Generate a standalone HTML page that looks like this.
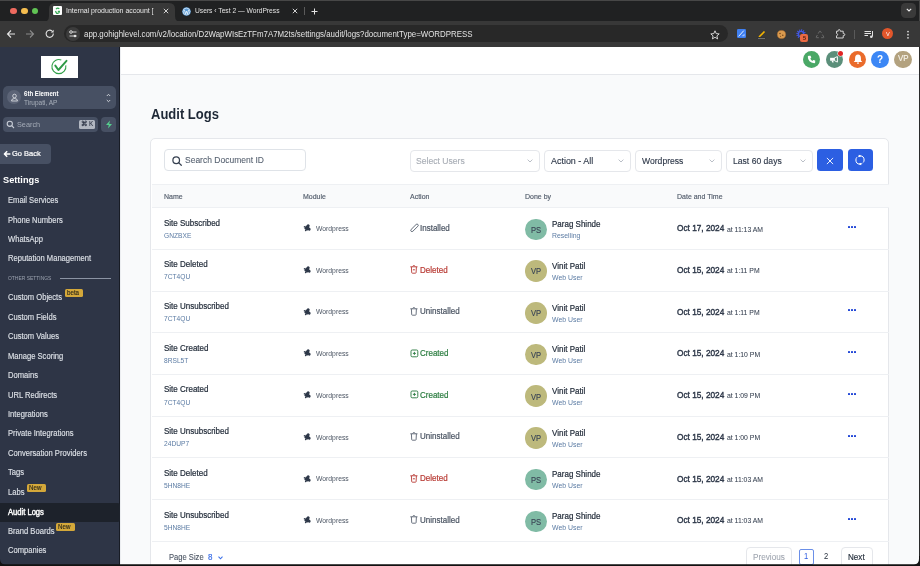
<!DOCTYPE html>
<html><head><meta charset="utf-8">
<style>
*{box-sizing:border-box;margin:0;padding:0}
html,body{width:920px;height:566px;overflow:hidden;background:#151515;font-family:"Liberation Sans",sans-serif;position:relative}
.a{position:absolute}
.t{position:absolute;white-space:nowrap;will-change:transform}
svg{overflow:visible}
</style></head>
<body>
<div class="a" style="left:0px;top:0px;width:920px;height:47px;background:#202122"></div>
<div class="a" style="left:0px;top:0px;width:920px;height:1px;background:#474747"></div>
<div class="a" style="left:919px;top:0px;width:1px;height:47px;background:#474747"></div>
<div class="a" style="left:10.1px;top:7.6px;width:6.8px;height:6.8px;background:#ee6a5f;border-radius:50%"></div>
<div class="a" style="left:21.1px;top:7.6px;width:6.8px;height:6.8px;background:#f5bd4f;border-radius:50%"></div>
<div class="a" style="left:31.6px;top:7.6px;width:6.8px;height:6.8px;background:#61c454;border-radius:50%"></div>
<svg class="a" style="left:43px;top:3px" width="138" height="19" viewBox="0 0 138 19"><path d="M0 19 Q6 19 6 13 L6 6 Q6 0 12 0 L126 0 Q132 0 132 6 L132 13 Q132 19 138 19 Z" fill="#383838"/></svg>
<div class="a" style="left:0px;top:21px;width:920px;height:26px;background:#383838"></div>
<div class="a" style="left:53px;top:6px;width:9px;height:9px;background:#fff;border-radius:1px"></div>
<svg class="a" style="left:53px;top:6px;" width="9" height="9" viewBox="0 0 9 9"><path d="M3 3.2 Q4.5 1.5 6.3 2.8 M2.6 4.8 Q3 7.6 4.6 7.4 Q6.4 7.2 6.4 5.4 L4.8 5.4" stroke="#34a853" stroke-width="1.2" fill="none"/></svg>
<div class="t" style="left:66px;top:5.98px;font-size:6.95px;line-height:9px;color:#e8e8e8;width:94px;overflow:hidden;-webkit-mask-image:linear-gradient(90deg,#000 86%,transparent 97%)transform:scaleY(1.08);transform-origin:0 4.42px;">Internal production account [</div>
<svg class="a" style="left:162.5px;top:8px;" width="6" height="6" viewBox="0 0 6 6"><path d="M0.8 0.8 L5.2 5.2 M5.2 0.8 L0.8 5.2" stroke="#e3e3e3" stroke-width="0.9"/></svg>
<svg class="a" style="left:291.5px;top:8px;" width="6" height="6" viewBox="0 0 6 6"><path d="M0.8 0.8 L5.2 5.2 M5.2 0.8 L0.8 5.2" stroke="#e3e3e3" stroke-width="0.9"/></svg>
<svg class="a" style="left:181.5px;top:6.5px;" width="9" height="9" viewBox="0 0 9 9"><circle cx="4.5" cy="4.5" r="4.3" fill="#5b9bd5"/><circle cx="4.5" cy="4.5" r="3.4" fill="none" stroke="#fff" stroke-width="0.6"/><path d="M2.4 3 L3.6 6.8 L4.5 4.2 L5.4 6.8 L6.6 3" stroke="#fff" stroke-width="0.7" fill="none"/></svg>
<div class="t" style="left:195px;top:5.98px;font-size:6.7px;line-height:9px;color:#e3e3e3;transform:scaleY(1.08);transform-origin:0 4.42px;">Users ‹ Test 2 — WordPress</div>
<div class="a" style="left:304px;top:7px;width:0.8px;height:8px;background:#5a5a5a"></div>
<svg class="a" style="left:310.5px;top:7.5px;" width="7" height="7" viewBox="0 0 7 7"><path d="M3.5 0.5 V6.5 M0.5 3.5 H6.5" stroke="#e3e3e3" stroke-width="1"/></svg>
<div class="a" style="left:901px;top:2.9px;width:15px;height:15px;background:#3a3a3a;border-radius:4.5px"></div>
<svg class="a" style="left:905.5px;top:8.2px;" width="6" height="4" viewBox="0 0 6 4"><path d="M0.8 0.8 L3 3 L5.2 0.8" stroke="#f0f0f0" stroke-width="1.1" fill="none"/></svg>
<svg class="a" style="left:6px;top:29px;" width="10" height="10" viewBox="0 0 10 10"><path d="M9 5 H1.5 M5 1.5 L1.5 5 L5 8.5" stroke="#e3e3e3" stroke-width="1.1" fill="none"/></svg>
<svg class="a" style="left:25px;top:29px;" width="10" height="10" viewBox="0 0 10 10"><path d="M1 5 H8.5 M5 1.5 L8.5 5 L5 8.5" stroke="#8a8a8a" stroke-width="1.1" fill="none"/></svg>
<svg class="a" style="left:45px;top:29px;" width="10" height="10" viewBox="0 0 10 10"><path d="M8.3 4.5 A3.6 3.6 0 1 1 7 2" stroke="#e3e3e3" stroke-width="1.1" fill="none"/><path d="M8.6 0.8 V3.6 H5.8 Z" fill="#e3e3e3"/></svg>
<div class="a" style="left:64px;top:25.3px;width:664px;height:17px;background:#282828;border-radius:8.5px"></div>
<div class="a" style="left:66px;top:26.5px;width:14px;height:14px;background:#3c3c3c;border-radius:50%"></div>
<svg class="a" style="left:68px;top:28.5px;" width="10" height="10" viewBox="0 0 10 10"><path d="M1.5 3 H8.5 M1.5 7 H8.5" stroke="#e3e3e3" stroke-width="0.9"/><circle cx="3" cy="3" r="1.3" fill="#3c3c3c" stroke="#e3e3e3" stroke-width="0.9"/><circle cx="7" cy="7" r="1.3" fill="#e3e3e3"/></svg>
<div class="t" style="left:84px;top:30.29px;font-size:7.9px;line-height:10px;color:#e3e3e3;transform:scaleY(1.08);transform-origin:0 4.91px;">app.gohighlevel.com/v2/location/D2WapWIsEzTFm7A7M2ts/settings/audit/logs?documentType=WORDPRESS</div>
<svg class="a" style="left:710px;top:29.5px;" width="10" height="10" viewBox="0 0 10 10"><path d="M5 0.8 L6.2 3.6 L9.2 3.9 L6.9 5.9 L7.6 8.9 L5 7.3 L2.4 8.9 L3.1 5.9 L0.8 3.9 L3.8 3.6 Z" stroke="#e3e3e3" stroke-width="0.9" fill="none" stroke-linejoin="round"/></svg>
<svg class="a" style="left:737.3px;top:29.4px;" width="9" height="9" viewBox="0 0 9 9"><rect x="0" y="0" width="9" height="9" rx="1.3" fill="#3f7ff0"/><path d="M1.6 7.4 L6.8 1.6" stroke="#fff" stroke-width="0.9"/><path d="M4.5 7.3 H7.6 V4.5 Z" fill="#9fc0fa"/></svg>
<svg class="a" style="left:756.5px;top:29.5px;" width="9" height="9" viewBox="0 0 9 9"><path d="M2 7 L7.5 1.5" stroke="#f4b400" stroke-width="1.6"/><rect x="0.5" y="7" width="8" height="2" fill="#333"/><path d="M1 8.5 H8" stroke="#999" stroke-width="0.6"/></svg>
<svg class="a" style="left:776.5px;top:29.5px;" width="9" height="9" viewBox="0 0 9 9"><circle cx="4.5" cy="4.5" r="4.1" fill="#d99a4e"/><circle cx="4.5" cy="4.5" r="4.1" fill="none" stroke="#b87430" stroke-width="0.5"/><circle cx="3" cy="3.5" r="0.7" fill="#6b3c14"/><circle cx="5.8" cy="5.3" r="0.7" fill="#6b3c14"/><circle cx="3.6" cy="6.2" r="0.5" fill="#6b3c14"/></svg>
<svg class="a" style="left:795.5px;top:28.5px;" width="10" height="10" viewBox="0 0 10 10"><circle cx="5" cy="5" r="3.9" fill="none" stroke="#4258e0" stroke-width="1.6" stroke-dasharray="1.1 0.9"/><circle cx="5" cy="5" r="2.6" fill="none" stroke="#4258e0" stroke-width="1.4"/></svg>
<div class="a" style="left:800.3px;top:34.3px;width:7.7px;height:7.6px;background:#ec6a43;border-radius:2px"></div>
<div class="t" style="left:802.5px;top:34.66px;font-size:5.5px;line-height:7px;color:#4a1a0a;font-weight:bold;transform:scaleY(1.08);transform-origin:0 3.44px;">5</div>
<svg class="a" style="left:814.5px;top:29.5px;" width="10" height="10" viewBox="0 0 10 10"><path d="M3.2 3.6 L4.6 1.2 Q5 0.7 5.4 1.2 L6.4 2.9 M7.4 4.6 L8.8 7 Q9 7.7 8.4 7.7 H6.2 M3.8 7.7 H1.6 Q1 7.7 1.2 7 L2.4 5" stroke="#6e6e6e" stroke-width="0.9" fill="none"/></svg>
<svg class="a" style="left:834.5px;top:29.3px;" width="11" height="10" viewBox="0 0 11 10"><path d="M1.5 2.2 H3.2 V1.6 Q3.2 0.6 4.2 0.6 Q5.2 0.6 5.2 1.6 V2.2 H8.2 V4.6 H8.8 Q9.8 4.6 9.8 5.6 Q9.8 6.6 8.8 6.6 H8.2 V9 H1.5 V6.8 Q2.6 6.6 2.6 5.6 Q2.6 4.6 1.5 4.4 Z" stroke="#e3e3e3" stroke-width="0.9" fill="none" stroke-linejoin="round"/></svg>
<div class="a" style="left:853.5px;top:29.5px;width:0.8px;height:9px;background:#5a5a5a"></div>
<svg class="a" style="left:864px;top:29.5px;" width="10" height="9" viewBox="0 0 10 9"><path d="M0.5 1.5 H7 M0.5 3.5 H7 M0.5 5.5 H4" stroke="#e3e3e3" stroke-width="1"/><path d="M8.5 1 V6.5" stroke="#e3e3e3" stroke-width="1"/><circle cx="7.3" cy="6.8" r="1.3" fill="#e3e3e3"/></svg>
<div class="a" style="left:882.3px;top:28.4px;width:11px;height:11px;background:#e2562b;border-radius:50%"></div>
<div class="t" style="left:885.6px;top:30.76px;font-size:5.6px;line-height:7px;color:#fff;">V</div>
<svg class="a" style="left:905.5px;top:29.5px;" width="4" height="10" viewBox="0 0 4 10"><circle cx="2" cy="1.6" r="0.85" fill="#e3e3e3"/><circle cx="2" cy="4.7" r="0.85" fill="#e3e3e3"/><circle cx="2" cy="7.8" r="0.85" fill="#e3e3e3"/></svg>
<div class="a" style="left:0px;top:47px;width:920px;height:519px;background:#f9fafb"></div>
<div class="a" style="left:0px;top:47px;width:120px;height:519px;background:#2e3546"></div>
<div class="a" style="left:119px;top:47px;width:1px;height:519px;background:#181c25"></div>
<div class="a" style="left:41px;top:55.6px;width:37px;height:22px;background:#fff"></div>
<svg class="a" style="left:50px;top:58px;" width="18" height="18" viewBox="0 0 18 18"><path d="M15.8 7.4 A7 7 0 1 1 11.3 2.0" fill="none" stroke="#33a04a" stroke-width="1.1"/><path d="M5.3 7.6 L8.4 12 L16.5 2.8" stroke="#2e9a46" stroke-width="1.9" fill="none" stroke-linecap="round" stroke-linejoin="round"/></svg>
<div class="a" style="left:3px;top:86px;width:113px;height:22.5px;background:#475063;border-radius:5px"></div>
<div class="a" style="left:7px;top:90.3px;width:14px;height:14px;background:#5c6477;border-radius:50%"></div>
<svg class="a" style="left:9.5px;top:92.8px;" width="9" height="9" viewBox="0 0 9 9"><circle cx="4.5" cy="3" r="1.8" fill="none" stroke="#e5e7eb" stroke-width="0.8"/><path d="M1.5 8 Q1.5 5.5 4.5 5.5 Q7.5 5.5 7.5 8 Z" fill="none" stroke="#e5e7eb" stroke-width="0.8"/></svg>
<div class="t" style="left:24px;top:90.37px;font-size:6.1px;line-height:8px;color:#fff;font-weight:bold;transform:scaleY(1.08);transform-origin:0 3.93px;">6th Element</div>
<div class="t" style="left:24px;top:98.87px;font-size:6.5px;line-height:8px;color:#a9b0bb;transform:scaleY(1.08);transform-origin:0 3.93px;">Tirupati, AP</div>
<svg class="a" style="left:105.5px;top:92.5px;" width="5" height="10" viewBox="0 0 5 10"><path d="M0.8 3 L2.5 1.3 L4.2 3 M0.8 7 L2.5 8.7 L4.2 7" stroke="#d1d5db" stroke-width="0.95" fill="none"/></svg>
<div class="a" style="left:3px;top:117px;width:95px;height:14.5px;background:#475063;border-radius:4px"></div>
<svg class="a" style="left:6px;top:119.5px;" width="9" height="9" viewBox="0 0 9 9"><circle cx="3.8" cy="3.8" r="2.6" fill="none" stroke="#c7ccd5" stroke-width="1.1"/><path d="M5.7 5.7 L8 8" stroke="#c7ccd5" stroke-width="1.1"/></svg>
<div class="t" style="left:16.7px;top:119.78px;font-size:7.3px;line-height:9px;color:#a3aab6;transform:scaleY(1.08);transform-origin:0 4.42px;">Search</div>
<div class="a" style="left:79px;top:120px;width:16px;height:8.7px;background:#b3b8c2;border-radius:1.5px"></div>
<div class="t" style="left:80.6px;top:120.47px;font-size:6.3px;line-height:8px;color:#2e3546;font-weight:bold;transform:scaleY(1.08);transform-origin:0 3.93px;">⌘</div>
<div class="t" style="left:88.6px;top:120.47px;font-size:6.3px;line-height:8px;color:#2e3546;-webkit-text-stroke-width:0.1px;transform:scaleY(1.08);transform-origin:0 3.93px;">K</div>
<div class="a" style="left:101px;top:117px;width:15px;height:14.5px;background:#475063;border-radius:4px"></div>
<svg class="a" style="left:104.5px;top:120px;" width="8" height="9" viewBox="0 0 8 9"><path d="M5 0.5 L1 5 H3.8 L3 8.5 L7 4 H4.2 Z" fill="#55d08e"/></svg>
<div class="a" style="left:0px;top:144px;width:51px;height:19.7px;background:#475063;border-radius:0 4px 4px 0"></div>
<svg class="a" style="left:3.2px;top:150.2px;" width="8" height="8" viewBox="0 0 8 8"><path d="M7.4 4 H1.5 M4.2 1.2 L1.4 4 L4.2 6.8" stroke="#fff" stroke-width="1.5" fill="none" stroke-linejoin="round"/></svg>
<div class="t" style="left:12px;top:149.29px;font-size:7.5px;line-height:10px;color:#fff;-webkit-text-stroke-width:0.2px;transform:scaleY(1.08);transform-origin:0 4.91px;">Go Back</div>
<div class="t" style="left:3.4px;top:173.91px;font-size:9.2px;line-height:12px;color:#fff;font-weight:bold;transform:scaleY(1.08);transform-origin:0 5.89px;">Settings</div>
<div class="t" style="left:7.7px;top:196.09px;font-size:7.6px;line-height:10px;color:#dde1e7;-webkit-text-stroke-width:0.12px;transform:scaleY(1.08);transform-origin:0 4.91px;">Email Services</div>
<div class="t" style="left:7.7px;top:215.54px;font-size:7.6px;line-height:10px;color:#dde1e7;-webkit-text-stroke-width:0.12px;transform:scaleY(1.08);transform-origin:0 4.91px;">Phone Numbers</div>
<div class="t" style="left:7.7px;top:234.99px;font-size:7.6px;line-height:10px;color:#dde1e7;-webkit-text-stroke-width:0.12px;transform:scaleY(1.08);transform-origin:0 4.91px;">WhatsApp</div>
<div class="t" style="left:7.7px;top:254.44px;font-size:7.6px;line-height:10px;color:#dde1e7;-webkit-text-stroke-width:0.12px;transform:scaleY(1.08);transform-origin:0 4.91px;">Reputation Management</div>
<div class="t" style="left:7.6px;top:275.86px;font-size:4.95px;line-height:6px;color:#9aa1ae;transform:scaleY(1.08);transform-origin:0 2.94px;">OTHER SETTINGS</div>
<div class="a" style="left:59.7px;top:278.40000000000003px;width:51.7px;height:0.8px;background:#8b93a3"></div>
<div class="t" style="left:7.7px;top:293.34px;font-size:7.6px;line-height:10px;color:#dde1e7;-webkit-text-stroke-width:0.12px;transform:scaleY(1.08);transform-origin:0 4.91px;">Custom Objects</div>
<div class="t" style="left:7.7px;top:312.79px;font-size:7.6px;line-height:10px;color:#dde1e7;-webkit-text-stroke-width:0.12px;transform:scaleY(1.08);transform-origin:0 4.91px;">Custom Fields</div>
<div class="t" style="left:7.7px;top:332.24px;font-size:7.6px;line-height:10px;color:#dde1e7;-webkit-text-stroke-width:0.12px;transform:scaleY(1.08);transform-origin:0 4.91px;">Custom Values</div>
<div class="t" style="left:7.7px;top:351.69px;font-size:7.6px;line-height:10px;color:#dde1e7;-webkit-text-stroke-width:0.12px;transform:scaleY(1.08);transform-origin:0 4.91px;">Manage Scoring</div>
<div class="t" style="left:7.7px;top:371.14px;font-size:7.6px;line-height:10px;color:#dde1e7;-webkit-text-stroke-width:0.12px;transform:scaleY(1.08);transform-origin:0 4.91px;">Domains</div>
<div class="t" style="left:7.7px;top:390.59px;font-size:7.6px;line-height:10px;color:#dde1e7;-webkit-text-stroke-width:0.12px;transform:scaleY(1.08);transform-origin:0 4.91px;">URL Redirects</div>
<div class="t" style="left:7.7px;top:410.04px;font-size:7.6px;line-height:10px;color:#dde1e7;-webkit-text-stroke-width:0.12px;transform:scaleY(1.08);transform-origin:0 4.91px;">Integrations</div>
<div class="t" style="left:7.7px;top:429.49px;font-size:7.6px;line-height:10px;color:#dde1e7;-webkit-text-stroke-width:0.12px;transform:scaleY(1.08);transform-origin:0 4.91px;">Private Integrations</div>
<div class="t" style="left:7.7px;top:448.94px;font-size:7.6px;line-height:10px;color:#dde1e7;-webkit-text-stroke-width:0.12px;transform:scaleY(1.08);transform-origin:0 4.91px;">Conversation Providers</div>
<div class="t" style="left:7.7px;top:468.39px;font-size:7.6px;line-height:10px;color:#dde1e7;-webkit-text-stroke-width:0.12px;transform:scaleY(1.08);transform-origin:0 4.91px;">Tags</div>
<div class="t" style="left:7.7px;top:487.84px;font-size:7.6px;line-height:10px;color:#dde1e7;-webkit-text-stroke-width:0.12px;transform:scaleY(1.08);transform-origin:0 4.91px;">Labs</div>
<div class="a" style="left:0px;top:502.70000000000005px;width:119.5px;height:19.2px;background:#1d222b;border-radius:0 2.5px 2.5px 0"></div>
<div class="t" style="left:7.6px;top:508.19px;font-size:7.6px;line-height:10px;color:#fff;-webkit-text-stroke-width:0.38px;transform:scaleY(1.08);transform-origin:0 4.91px;">Audit Logs</div>
<div class="t" style="left:7.7px;top:526.74px;font-size:7.6px;line-height:10px;color:#dde1e7;-webkit-text-stroke-width:0.12px;transform:scaleY(1.08);transform-origin:0 4.91px;">Brand Boards</div>
<div class="t" style="left:7.7px;top:546.19px;font-size:7.6px;line-height:10px;color:#dde1e7;-webkit-text-stroke-width:0.12px;transform:scaleY(1.08);transform-origin:0 4.91px;">Companies</div>
<div class="a" style="left:64.8px;top:289px;width:18.4px;height:8.2px;background:#d4a83a;border-radius:1.5px"></div>
<div class="t" style="left:66.8px;top:289.07px;font-size:6.2px;line-height:8px;color:#2f2a1a;-webkit-text-stroke-width:0.15px;transform:scaleY(1.08);transform-origin:0 3.93px;">beta</div>
<div class="a" style="left:27.2px;top:484px;width:18.4px;height:8.2px;background:#d4a83a;border-radius:1.5px"></div>
<div class="t" style="left:29px;top:484.07px;font-size:6.2px;line-height:8px;color:#2f2a1a;-webkit-text-stroke-width:0.15px;transform:scaleY(1.08);transform-origin:0 3.93px;">New</div>
<div class="a" style="left:56.4px;top:523px;width:18.4px;height:8.2px;background:#d4a83a;border-radius:1.5px"></div>
<div class="t" style="left:58.2px;top:523.07px;font-size:6.2px;line-height:8px;color:#2f2a1a;-webkit-text-stroke-width:0.15px;transform:scaleY(1.08);transform-origin:0 3.93px;">New</div>
<div class="a" style="left:120px;top:47px;width:800px;height:28.3px;background:#fff;border-bottom:1px solid #e5e7eb"></div>
<div class="a" style="left:120px;top:47px;width:1px;height:519px;background:#eceef1"></div>
<div class="a" style="left:802.9px;top:50.5px;width:17.2px;height:17.2px;background:#4aa866;border-radius:50%"></div>
<div class="a" style="left:825.8px;top:50.5px;width:17.2px;height:17.2px;background:#5b8f7a;border-radius:50%"></div>
<div class="a" style="left:848.8px;top:50.5px;width:17.2px;height:17.2px;background:#ea6b2b;border-radius:50%"></div>
<div class="a" style="left:871.4px;top:50.5px;width:17.2px;height:17.2px;background:#3c87f5;border-radius:50%"></div>
<div class="a" style="left:894.4px;top:50.5px;width:17.2px;height:17.2px;background:#b3a27f;border-radius:50%"></div>
<svg class="a" style="left:807px;top:54.6px;" width="9" height="9" viewBox="0 0 9 9"><path d="M2 0.8 L3.6 0.8 L4.3 2.8 L3.3 3.6 Q4 5.2 5.4 5.9 L6.2 4.9 L8.2 5.6 L8.2 7.2 Q8.2 8.2 7.2 8.2 Q1 7.8 0.8 1.8 Q0.8 0.8 2 0.8 Z" fill="#fff"/></svg>
<svg class="a" style="left:829px;top:55px;" width="10" height="9" viewBox="0 0 10 9"><rect x="1.1" y="2.8" width="4.3" height="2.9" fill="#fff"/><path d="M2.4 5.6 L3.3 7.6 H4.6 L4.3 5.6 Z" fill="#fff"/><path d="M5.4 2.9 L8.4 1.6 V7.1 L5.4 5.6 Z" fill="none" stroke="#fff" stroke-width="0.95" stroke-linejoin="round"/></svg>
<div class="a" style="left:837.6px;top:50.7px;width:5.4px;height:5.4px;background:#e02424;border-radius:50%;box-shadow:0 0 0 0.5px #fff"></div>
<svg class="a" style="left:852.6px;top:54.2px;" width="10" height="10" viewBox="0 0 10 10"><path d="M5 0.4 Q7.8 0.6 7.9 4 L8 6.4 L9.3 8.1 H0.7 L2 6.4 L2.1 4 Q2.2 0.6 5 0.4 Z" fill="#fff"/><circle cx="5" cy="9.1" r="0.9" fill="#fff"/></svg>
<div class="t" style="left:876.7px;top:52.72px;font-size:10px;line-height:13px;color:#fff;font-weight:bold;transform:scaleY(1.08);transform-origin:0 6.38px;">?</div>
<div class="t" style="left:897.6px;top:54.39px;font-size:7.9px;line-height:10px;color:#f7f4ec;-webkit-text-stroke-width:0.15px;transform:scaleY(1.08);transform-origin:0 4.91px;">VP</div>
<div class="t" style="left:151px;top:105.55px;font-size:13px;line-height:17px;color:#1f2937;font-weight:bold;transform:scaleY(1.08);transform-origin:0 8.35px;">Audit Logs</div>
<div class="a" style="left:150px;top:138.2px;width:739.3px;height:440px;background:#fff;border:1px solid #e5e7eb;border-radius:5px"></div>
<div class="a" style="left:164px;top:149.2px;width:142px;height:22.3px;background:#fff;border:1px solid #dfe3e8;border-radius:4px"></div>
<svg class="a" style="left:171.5px;top:155.5px;" width="10" height="10" viewBox="0 0 10 10"><circle cx="4.2" cy="4.2" r="3.3" fill="none" stroke="#374151" stroke-width="1.25"/><path d="M6.6 6.6 L9.3 9.3" stroke="#374151" stroke-width="1.25" stroke-linecap="round"/></svg>
<div class="t" style="left:184.7px;top:155.20px;font-size:8.5px;line-height:11px;color:#566170;-webkit-text-stroke-width:0.08px;transform:scaleY(1.08);transform-origin:0 5.40px;">Search Document ID</div>
<div class="a" style="left:410px;top:149.5px;width:129.70000000000005px;height:22.2px;background:#fff;border:1px solid #e5e7eb;border-radius:4px"></div>
<div class="t" style="left:416.4px;top:155.50px;font-size:8.6px;line-height:11px;color:#a8adb5;-webkit-text-stroke-width:0.12px;transform:scaleY(1.08);transform-origin:0 5.40px;">Select Users</div>
<svg class="a" style="left:526.7px;top:159px;" width="6" height="4" viewBox="0 0 6 4"><path d="M0.6 0.6 L3 3 L5.4 0.6" stroke="#9ca3af" stroke-width="0.7" fill="none"/></svg>
<div class="a" style="left:544.4px;top:149.5px;width:86.39999999999998px;height:22.2px;background:#fff;border:1px solid #e5e7eb;border-radius:4px"></div>
<div class="t" style="left:550.9px;top:155.00px;font-size:8.95px;line-height:12px;color:#2d3748;-webkit-text-stroke-width:0.12px;transform:scaleY(1.08);transform-origin:0 5.90px;">Action - All</div>
<svg class="a" style="left:617.8px;top:159px;" width="6" height="4" viewBox="0 0 6 4"><path d="M0.6 0.6 L3 3 L5.4 0.6" stroke="#9ca3af" stroke-width="0.7" fill="none"/></svg>
<div class="a" style="left:635.3px;top:149.5px;width:86.30000000000007px;height:22.2px;background:#fff;border:1px solid #e5e7eb;border-radius:4px"></div>
<div class="t" style="left:641.7px;top:155.50px;font-size:8.6px;line-height:11px;color:#2d3748;-webkit-text-stroke-width:0.12px;transform:scaleY(1.08);transform-origin:0 5.40px;">Wordpress</div>
<svg class="a" style="left:708.6px;top:159px;" width="6" height="4" viewBox="0 0 6 4"><path d="M0.6 0.6 L3 3 L5.4 0.6" stroke="#9ca3af" stroke-width="0.7" fill="none"/></svg>
<div class="a" style="left:726.3px;top:149.5px;width:86.30000000000007px;height:22.2px;background:#fff;border:1px solid #e5e7eb;border-radius:4px"></div>
<div class="t" style="left:732.7px;top:155.50px;font-size:8.6px;line-height:11px;color:#2d3748;-webkit-text-stroke-width:0.12px;transform:scaleY(1.08);transform-origin:0 5.40px;">Last 60 days</div>
<svg class="a" style="left:799.6px;top:159px;" width="6" height="4" viewBox="0 0 6 4"><path d="M0.6 0.6 L3 3 L5.4 0.6" stroke="#9ca3af" stroke-width="0.7" fill="none"/></svg>
<div class="a" style="left:817px;top:149.4px;width:26px;height:21.3px;background:#2c5fe2;border-radius:3.5px"></div>
<svg class="a" style="left:826px;top:156.6px;" width="8" height="8" viewBox="0 0 8 8"><path d="M0.9 0.9 L7.1 7.1 M7.1 0.9 L0.9 7.1" stroke="#fff" stroke-width="0.9"/></svg>
<div class="a" style="left:847.5px;top:149.4px;width:25.8px;height:21.3px;background:#2c5fe2;border-radius:3.5px"></div>
<svg class="a" style="left:855.3px;top:155px;" width="10" height="10" viewBox="0 0 10 10"><circle cx="5" cy="5" r="4.1" fill="none" stroke="#fff" stroke-width="1" stroke-dasharray="2.6 1.3 11.6 1.3 9"/><path d="M3.9 -0.3 L6.6 0.9 L3.9 2.2 Z" fill="#fff"/><path d="M6.1 7.8 L3.4 9.1 L6.1 10.3 Z" fill="#fff"/></svg>
<div class="a" style="left:151.5px;top:184.4px;width:737px;height:23.2px;background:#f9fafb;border-top:1px solid #eef0f3;border-bottom:1px solid #eef0f3"></div>
<div class="t" style="left:164px;top:191.58px;font-size:7px;line-height:9px;color:#525c6b;-webkit-text-stroke-width:0.15px;transform:scaleY(1.08);transform-origin:0 4.42px;">Name</div>
<div class="t" style="left:302.5px;top:191.58px;font-size:7px;line-height:9px;color:#525c6b;-webkit-text-stroke-width:0.15px;transform:scaleY(1.08);transform-origin:0 4.42px;">Module</div>
<div class="t" style="left:409.5px;top:191.58px;font-size:7px;line-height:9px;color:#525c6b;-webkit-text-stroke-width:0.15px;transform:scaleY(1.08);transform-origin:0 4.42px;">Action</div>
<div class="t" style="left:525.2px;top:191.58px;font-size:7px;line-height:9px;color:#525c6b;-webkit-text-stroke-width:0.15px;transform:scaleY(1.08);transform-origin:0 4.42px;">Done by</div>
<div class="t" style="left:676.7px;top:191.58px;font-size:7px;line-height:9px;color:#525c6b;-webkit-text-stroke-width:0.15px;transform:scaleY(1.08);transform-origin:0 4.42px;">Date and Time</div>
<div class="a" style="left:151.5px;top:248.8px;width:737px;height:1px;background:#eef0f3"></div>
<div class="t" style="left:164px;top:218.64px;font-size:8px;line-height:10px;color:#1f2937;-webkit-text-stroke-width:0.2px;transform:scaleY(1.08);transform-origin:0 4.91px;">Site Subscribed</div>
<div class="t" style="left:164px;top:230.73px;font-size:6.65px;line-height:9px;color:#5b7ba3;transform:scaleY(1.08);transform-origin:0 4.42px;">GNZBXE</div>
<svg class="a" style="left:302.8px;top:224.35px;" width="8" height="8" viewBox="0 0 8 8"><g transform="rotate(28 4 4)" fill="#2d3748"><rect x="1.9" y="2.1" width="4" height="3.9" rx="0.4"/><circle cx="4" cy="1.4" r="1.45"/><circle cx="6.6" cy="4.1" r="1.4"/><path d="M1.9 3.3 Q0.4 3.1 0.4 4.1 Q0.4 5.1 1.9 4.9 Z"/><path d="M3.1 6 Q3 7.6 4 7.6 Q5 7.6 4.9 6 Z"/></g></svg>
<div class="t" style="left:315.5px;top:224.03px;font-size:6.8px;line-height:9px;color:#4b5563;transform:scaleY(1.08);transform-origin:0 4.42px;">Wordpress</div>
<svg class="a" style="left:409.5px;top:223.95px;" width="9" height="8" viewBox="0 0 9 8"><rect x="-0.3" y="2.6" width="9.6" height="2.5" rx="1.25" transform="rotate(-45 4.5 3.85)" fill="none" stroke="#525c6b" stroke-width="0.85"/></svg>
<div class="t" style="left:420px;top:223.94px;font-size:8px;line-height:10px;color:#4b5563;-webkit-text-stroke-width:0.2px;transform:scaleY(1.08);transform-origin:0 4.91px;">Installed</div>
<div class="a" style="left:525.2px;top:218.64999999999998px;width:21.6px;height:21.6px;background:#80bba5;border-radius:50%"></div>
<div class="t" style="left:530.7px;top:225.74px;font-size:7.6px;line-height:10px;color:#3b4656;-webkit-text-stroke-width:0.15px;transform:scaleY(1.08);transform-origin:0 4.91px;">PS</div>
<div class="t" style="left:552.3px;top:220.24px;font-size:8px;line-height:10px;color:#1f2937;-webkit-text-stroke-width:0.2px;transform:scaleY(1.08);transform-origin:0 4.91px;">Parag Shinde</div>
<div class="t" style="left:552.3px;top:231.23px;font-size:6.9px;line-height:9px;color:#5b7ba3;transform:scaleY(1.08);transform-origin:0 4.42px;">Reselling</div>
<div class="t" style="left:676.7px;top:223.34px;font-size:8.25px;line-height:11px;color:#2d3748;-webkit-text-stroke-width:0.38px;transform:scaleY(1.08);transform-origin:0 5.41px;">Oct 17, 2024</div>
<div class="t" style="left:727px;top:224.53px;font-size:6.85px;line-height:9px;color:#374151;-webkit-text-stroke-width:0.05px;transform:scaleY(1.08);transform-origin:0 4.42px;">at 11:13 AM</div>
<div class="a" style="left:847.5px;top:226.04999999999998px;width:2px;height:2px;background:#1f45d6;border-radius:0.6px"></div>
<div class="a" style="left:850.8px;top:226.04999999999998px;width:2px;height:2px;background:#1f45d6;border-radius:0.6px"></div>
<div class="a" style="left:853.9px;top:226.04999999999998px;width:2px;height:2px;background:#1f45d6;border-radius:0.6px"></div>
<div class="a" style="left:151.5px;top:290.5px;width:737px;height:1px;background:#eef0f3"></div>
<div class="t" style="left:164px;top:260.34px;font-size:8px;line-height:10px;color:#1f2937;-webkit-text-stroke-width:0.2px;transform:scaleY(1.08);transform-origin:0 4.91px;">Site Deleted</div>
<div class="t" style="left:164px;top:272.43px;font-size:6.65px;line-height:9px;color:#5b7ba3;transform:scaleY(1.08);transform-origin:0 4.42px;">7CT4QU</div>
<svg class="a" style="left:302.8px;top:266.04999999999995px;" width="8" height="8" viewBox="0 0 8 8"><g transform="rotate(28 4 4)" fill="#2d3748"><rect x="1.9" y="2.1" width="4" height="3.9" rx="0.4"/><circle cx="4" cy="1.4" r="1.45"/><circle cx="6.6" cy="4.1" r="1.4"/><path d="M1.9 3.3 Q0.4 3.1 0.4 4.1 Q0.4 5.1 1.9 4.9 Z"/><path d="M3.1 6 Q3 7.6 4 7.6 Q5 7.6 4.9 6 Z"/></g></svg>
<div class="t" style="left:315.5px;top:265.73px;font-size:6.8px;line-height:9px;color:#4b5563;transform:scaleY(1.08);transform-origin:0 4.42px;">Wordpress</div>
<svg class="a" style="left:409.8px;top:265.15px;" width="8" height="9" viewBox="0 0 8 9"><path d="M2.6 1.5 L3.3 0.6 H4.5 L5.2 1.5" fill="none" stroke="#b83a34" stroke-width="0.85"/><path d="M0.7 1.8 H7.1" stroke="#b83a34" stroke-width="0.9" stroke-linecap="round"/><path d="M1.4 1.9 L1.7 7.6 Q1.8 8.2 2.4 8.2 H5.4 Q6 8.2 6.1 7.6 L6.4 1.9" fill="none" stroke="#b83a34" stroke-width="0.9"/><path d="M2.9 4.8 H4.9" stroke="#b83a34" stroke-width="0.95"/></svg>
<div class="t" style="left:420px;top:265.64px;font-size:8px;line-height:10px;color:#b83a34;-webkit-text-stroke-width:0.2px;transform:scaleY(1.08);transform-origin:0 4.91px;">Deleted</div>
<div class="a" style="left:525.2px;top:260.34999999999997px;width:21.6px;height:21.6px;background:#bdb97c;border-radius:50%"></div>
<div class="t" style="left:530.7px;top:267.44px;font-size:7.6px;line-height:10px;color:#3b4656;-webkit-text-stroke-width:0.15px;transform:scaleY(1.08);transform-origin:0 4.91px;">VP</div>
<div class="t" style="left:552.3px;top:261.94px;font-size:8px;line-height:10px;color:#1f2937;-webkit-text-stroke-width:0.2px;transform:scaleY(1.08);transform-origin:0 4.91px;">Vinit Patil</div>
<div class="t" style="left:552.3px;top:272.93px;font-size:6.9px;line-height:9px;color:#5b7ba3;transform:scaleY(1.08);transform-origin:0 4.42px;">Web User</div>
<div class="t" style="left:676.7px;top:265.04px;font-size:8.25px;line-height:11px;color:#2d3748;-webkit-text-stroke-width:0.38px;transform:scaleY(1.08);transform-origin:0 5.41px;">Oct 15, 2024</div>
<div class="t" style="left:727px;top:266.23px;font-size:6.85px;line-height:9px;color:#374151;-webkit-text-stroke-width:0.05px;transform:scaleY(1.08);transform-origin:0 4.42px;">at 1:11 PM</div>
<div class="a" style="left:151.5px;top:332.2px;width:737px;height:1px;background:#eef0f3"></div>
<div class="t" style="left:164px;top:302.04px;font-size:8px;line-height:10px;color:#1f2937;-webkit-text-stroke-width:0.2px;transform:scaleY(1.08);transform-origin:0 4.91px;">Site Unsubscribed</div>
<div class="t" style="left:164px;top:314.13px;font-size:6.65px;line-height:9px;color:#5b7ba3;transform:scaleY(1.08);transform-origin:0 4.42px;">7CT4QU</div>
<svg class="a" style="left:302.8px;top:307.75px;" width="8" height="8" viewBox="0 0 8 8"><g transform="rotate(28 4 4)" fill="#2d3748"><rect x="1.9" y="2.1" width="4" height="3.9" rx="0.4"/><circle cx="4" cy="1.4" r="1.45"/><circle cx="6.6" cy="4.1" r="1.4"/><path d="M1.9 3.3 Q0.4 3.1 0.4 4.1 Q0.4 5.1 1.9 4.9 Z"/><path d="M3.1 6 Q3 7.6 4 7.6 Q5 7.6 4.9 6 Z"/></g></svg>
<div class="t" style="left:315.5px;top:307.43px;font-size:6.8px;line-height:9px;color:#4b5563;transform:scaleY(1.08);transform-origin:0 4.42px;">Wordpress</div>
<svg class="a" style="left:409.8px;top:306.85px;" width="8" height="9" viewBox="0 0 8 9"><path d="M2.6 1.5 L3.3 0.6 H4.5 L5.2 1.5" fill="none" stroke="#5a6372" stroke-width="0.85"/><path d="M0.7 1.8 H7.1" stroke="#5a6372" stroke-width="0.9" stroke-linecap="round"/><path d="M1.4 1.9 L1.7 7.6 Q1.8 8.2 2.4 8.2 H5.4 Q6 8.2 6.1 7.6 L6.4 1.9" fill="none" stroke="#5a6372" stroke-width="0.9"/></svg>
<div class="t" style="left:420px;top:307.34px;font-size:8px;line-height:10px;color:#4b5563;-webkit-text-stroke-width:0.2px;transform:scaleY(1.08);transform-origin:0 4.91px;">Uninstalled</div>
<div class="a" style="left:525.2px;top:302.05px;width:21.6px;height:21.6px;background:#bdb97c;border-radius:50%"></div>
<div class="t" style="left:530.7px;top:309.14px;font-size:7.6px;line-height:10px;color:#3b4656;-webkit-text-stroke-width:0.15px;transform:scaleY(1.08);transform-origin:0 4.91px;">VP</div>
<div class="t" style="left:552.3px;top:303.64px;font-size:8px;line-height:10px;color:#1f2937;-webkit-text-stroke-width:0.2px;transform:scaleY(1.08);transform-origin:0 4.91px;">Vinit Patil</div>
<div class="t" style="left:552.3px;top:314.63px;font-size:6.9px;line-height:9px;color:#5b7ba3;transform:scaleY(1.08);transform-origin:0 4.42px;">Web User</div>
<div class="t" style="left:676.7px;top:306.74px;font-size:8.25px;line-height:11px;color:#2d3748;-webkit-text-stroke-width:0.38px;transform:scaleY(1.08);transform-origin:0 5.41px;">Oct 15, 2024</div>
<div class="t" style="left:727px;top:307.93px;font-size:6.85px;line-height:9px;color:#374151;-webkit-text-stroke-width:0.05px;transform:scaleY(1.08);transform-origin:0 4.42px;">at 1:11 PM</div>
<div class="a" style="left:847.5px;top:309.45000000000005px;width:2px;height:2px;background:#1f45d6;border-radius:0.6px"></div>
<div class="a" style="left:850.8px;top:309.45000000000005px;width:2px;height:2px;background:#1f45d6;border-radius:0.6px"></div>
<div class="a" style="left:853.9px;top:309.45000000000005px;width:2px;height:2px;background:#1f45d6;border-radius:0.6px"></div>
<div class="a" style="left:151.5px;top:373.9px;width:737px;height:1px;background:#eef0f3"></div>
<div class="t" style="left:164px;top:343.74px;font-size:8px;line-height:10px;color:#1f2937;-webkit-text-stroke-width:0.2px;transform:scaleY(1.08);transform-origin:0 4.91px;">Site Created</div>
<div class="t" style="left:164px;top:355.83px;font-size:6.65px;line-height:9px;color:#5b7ba3;transform:scaleY(1.08);transform-origin:0 4.42px;">8RSL5T</div>
<svg class="a" style="left:302.8px;top:349.44999999999993px;" width="8" height="8" viewBox="0 0 8 8"><g transform="rotate(28 4 4)" fill="#2d3748"><rect x="1.9" y="2.1" width="4" height="3.9" rx="0.4"/><circle cx="4" cy="1.4" r="1.45"/><circle cx="6.6" cy="4.1" r="1.4"/><path d="M1.9 3.3 Q0.4 3.1 0.4 4.1 Q0.4 5.1 1.9 4.9 Z"/><path d="M3.1 6 Q3 7.6 4 7.6 Q5 7.6 4.9 6 Z"/></g></svg>
<div class="t" style="left:315.5px;top:349.13px;font-size:6.8px;line-height:9px;color:#4b5563;transform:scaleY(1.08);transform-origin:0 4.42px;">Wordpress</div>
<svg class="a" style="left:409.5px;top:348.65px;" width="9" height="9" viewBox="0 0 9 9"><rect x="1" y="1" width="6.8" height="6.8" rx="1.2" fill="none" stroke="#2f7d44" stroke-width="0.95"/><path d="M4.4 2.9 V5.9 M2.9 4.4 H5.9" stroke="#2f7d44" stroke-width="0.95"/></svg>
<div class="t" style="left:420px;top:349.04px;font-size:8px;line-height:10px;color:#2b7d40;-webkit-text-stroke-width:0.2px;transform:scaleY(1.08);transform-origin:0 4.91px;">Created</div>
<div class="a" style="left:525.2px;top:343.74999999999994px;width:21.6px;height:21.6px;background:#bdb97c;border-radius:50%"></div>
<div class="t" style="left:530.7px;top:350.84px;font-size:7.6px;line-height:10px;color:#3b4656;-webkit-text-stroke-width:0.15px;transform:scaleY(1.08);transform-origin:0 4.91px;">VP</div>
<div class="t" style="left:552.3px;top:345.34px;font-size:8px;line-height:10px;color:#1f2937;-webkit-text-stroke-width:0.2px;transform:scaleY(1.08);transform-origin:0 4.91px;">Vinit Patil</div>
<div class="t" style="left:552.3px;top:356.33px;font-size:6.9px;line-height:9px;color:#5b7ba3;transform:scaleY(1.08);transform-origin:0 4.42px;">Web User</div>
<div class="t" style="left:676.7px;top:348.44px;font-size:8.25px;line-height:11px;color:#2d3748;-webkit-text-stroke-width:0.38px;transform:scaleY(1.08);transform-origin:0 5.41px;">Oct 15, 2024</div>
<div class="t" style="left:727px;top:349.63px;font-size:6.85px;line-height:9px;color:#374151;-webkit-text-stroke-width:0.05px;transform:scaleY(1.08);transform-origin:0 4.42px;">at 1:10 PM</div>
<div class="a" style="left:847.5px;top:351.15px;width:2px;height:2px;background:#1f45d6;border-radius:0.6px"></div>
<div class="a" style="left:850.8px;top:351.15px;width:2px;height:2px;background:#1f45d6;border-radius:0.6px"></div>
<div class="a" style="left:853.9px;top:351.15px;width:2px;height:2px;background:#1f45d6;border-radius:0.6px"></div>
<div class="a" style="left:151.5px;top:415.59999999999997px;width:737px;height:1px;background:#eef0f3"></div>
<div class="t" style="left:164px;top:385.44px;font-size:8px;line-height:10px;color:#1f2937;-webkit-text-stroke-width:0.2px;transform:scaleY(1.08);transform-origin:0 4.91px;">Site Created</div>
<div class="t" style="left:164px;top:397.53px;font-size:6.65px;line-height:9px;color:#5b7ba3;transform:scaleY(1.08);transform-origin:0 4.42px;">7CT4QU</div>
<svg class="a" style="left:302.8px;top:391.15px;" width="8" height="8" viewBox="0 0 8 8"><g transform="rotate(28 4 4)" fill="#2d3748"><rect x="1.9" y="2.1" width="4" height="3.9" rx="0.4"/><circle cx="4" cy="1.4" r="1.45"/><circle cx="6.6" cy="4.1" r="1.4"/><path d="M1.9 3.3 Q0.4 3.1 0.4 4.1 Q0.4 5.1 1.9 4.9 Z"/><path d="M3.1 6 Q3 7.6 4 7.6 Q5 7.6 4.9 6 Z"/></g></svg>
<div class="t" style="left:315.5px;top:390.83px;font-size:6.8px;line-height:9px;color:#4b5563;transform:scaleY(1.08);transform-origin:0 4.42px;">Wordpress</div>
<svg class="a" style="left:409.5px;top:390.35px;" width="9" height="9" viewBox="0 0 9 9"><rect x="1" y="1" width="6.8" height="6.8" rx="1.2" fill="none" stroke="#2f7d44" stroke-width="0.95"/><path d="M4.4 2.9 V5.9 M2.9 4.4 H5.9" stroke="#2f7d44" stroke-width="0.95"/></svg>
<div class="t" style="left:420px;top:390.74px;font-size:8px;line-height:10px;color:#2b7d40;-webkit-text-stroke-width:0.2px;transform:scaleY(1.08);transform-origin:0 4.91px;">Created</div>
<div class="a" style="left:525.2px;top:385.45px;width:21.6px;height:21.6px;background:#bdb97c;border-radius:50%"></div>
<div class="t" style="left:530.7px;top:392.54px;font-size:7.6px;line-height:10px;color:#3b4656;-webkit-text-stroke-width:0.15px;transform:scaleY(1.08);transform-origin:0 4.91px;">VP</div>
<div class="t" style="left:552.3px;top:387.04px;font-size:8px;line-height:10px;color:#1f2937;-webkit-text-stroke-width:0.2px;transform:scaleY(1.08);transform-origin:0 4.91px;">Vinit Patil</div>
<div class="t" style="left:552.3px;top:398.03px;font-size:6.9px;line-height:9px;color:#5b7ba3;transform:scaleY(1.08);transform-origin:0 4.42px;">Web User</div>
<div class="t" style="left:676.7px;top:390.14px;font-size:8.25px;line-height:11px;color:#2d3748;-webkit-text-stroke-width:0.38px;transform:scaleY(1.08);transform-origin:0 5.41px;">Oct 15, 2024</div>
<div class="t" style="left:727px;top:391.33px;font-size:6.85px;line-height:9px;color:#374151;-webkit-text-stroke-width:0.05px;transform:scaleY(1.08);transform-origin:0 4.42px;">at 1:09 PM</div>
<div class="a" style="left:847.5px;top:392.85px;width:2px;height:2px;background:#1f45d6;border-radius:0.6px"></div>
<div class="a" style="left:850.8px;top:392.85px;width:2px;height:2px;background:#1f45d6;border-radius:0.6px"></div>
<div class="a" style="left:853.9px;top:392.85px;width:2px;height:2px;background:#1f45d6;border-radius:0.6px"></div>
<div class="a" style="left:151.5px;top:457.3px;width:737px;height:1px;background:#eef0f3"></div>
<div class="t" style="left:164px;top:427.14px;font-size:8px;line-height:10px;color:#1f2937;-webkit-text-stroke-width:0.2px;transform:scaleY(1.08);transform-origin:0 4.91px;">Site Unsubscribed</div>
<div class="t" style="left:164px;top:439.23px;font-size:6.65px;line-height:9px;color:#5b7ba3;transform:scaleY(1.08);transform-origin:0 4.42px;">24DUP7</div>
<svg class="a" style="left:302.8px;top:432.85px;" width="8" height="8" viewBox="0 0 8 8"><g transform="rotate(28 4 4)" fill="#2d3748"><rect x="1.9" y="2.1" width="4" height="3.9" rx="0.4"/><circle cx="4" cy="1.4" r="1.45"/><circle cx="6.6" cy="4.1" r="1.4"/><path d="M1.9 3.3 Q0.4 3.1 0.4 4.1 Q0.4 5.1 1.9 4.9 Z"/><path d="M3.1 6 Q3 7.6 4 7.6 Q5 7.6 4.9 6 Z"/></g></svg>
<div class="t" style="left:315.5px;top:432.53px;font-size:6.8px;line-height:9px;color:#4b5563;transform:scaleY(1.08);transform-origin:0 4.42px;">Wordpress</div>
<svg class="a" style="left:409.8px;top:431.95000000000005px;" width="8" height="9" viewBox="0 0 8 9"><path d="M2.6 1.5 L3.3 0.6 H4.5 L5.2 1.5" fill="none" stroke="#5a6372" stroke-width="0.85"/><path d="M0.7 1.8 H7.1" stroke="#5a6372" stroke-width="0.9" stroke-linecap="round"/><path d="M1.4 1.9 L1.7 7.6 Q1.8 8.2 2.4 8.2 H5.4 Q6 8.2 6.1 7.6 L6.4 1.9" fill="none" stroke="#5a6372" stroke-width="0.9"/></svg>
<div class="t" style="left:420px;top:432.44px;font-size:8px;line-height:10px;color:#4b5563;-webkit-text-stroke-width:0.2px;transform:scaleY(1.08);transform-origin:0 4.91px;">Uninstalled</div>
<div class="a" style="left:525.2px;top:427.15000000000003px;width:21.6px;height:21.6px;background:#bdb97c;border-radius:50%"></div>
<div class="t" style="left:530.7px;top:434.24px;font-size:7.6px;line-height:10px;color:#3b4656;-webkit-text-stroke-width:0.15px;transform:scaleY(1.08);transform-origin:0 4.91px;">VP</div>
<div class="t" style="left:552.3px;top:428.74px;font-size:8px;line-height:10px;color:#1f2937;-webkit-text-stroke-width:0.2px;transform:scaleY(1.08);transform-origin:0 4.91px;">Vinit Patil</div>
<div class="t" style="left:552.3px;top:439.73px;font-size:6.9px;line-height:9px;color:#5b7ba3;transform:scaleY(1.08);transform-origin:0 4.42px;">Web User</div>
<div class="t" style="left:676.7px;top:431.84px;font-size:8.25px;line-height:11px;color:#2d3748;-webkit-text-stroke-width:0.38px;transform:scaleY(1.08);transform-origin:0 5.41px;">Oct 15, 2024</div>
<div class="t" style="left:727px;top:433.03px;font-size:6.85px;line-height:9px;color:#374151;-webkit-text-stroke-width:0.05px;transform:scaleY(1.08);transform-origin:0 4.42px;">at 1:00 PM</div>
<div class="a" style="left:847.5px;top:434.55000000000007px;width:2px;height:2px;background:#1f45d6;border-radius:0.6px"></div>
<div class="a" style="left:850.8px;top:434.55000000000007px;width:2px;height:2px;background:#1f45d6;border-radius:0.6px"></div>
<div class="a" style="left:853.9px;top:434.55000000000007px;width:2px;height:2px;background:#1f45d6;border-radius:0.6px"></div>
<div class="a" style="left:151.5px;top:499.0px;width:737px;height:1px;background:#eef0f3"></div>
<div class="t" style="left:164px;top:468.84px;font-size:8px;line-height:10px;color:#1f2937;-webkit-text-stroke-width:0.2px;transform:scaleY(1.08);transform-origin:0 4.91px;">Site Deleted</div>
<div class="t" style="left:164px;top:480.93px;font-size:6.65px;line-height:9px;color:#5b7ba3;transform:scaleY(1.08);transform-origin:0 4.42px;">5HN8HE</div>
<svg class="a" style="left:302.8px;top:474.54999999999995px;" width="8" height="8" viewBox="0 0 8 8"><g transform="rotate(28 4 4)" fill="#2d3748"><rect x="1.9" y="2.1" width="4" height="3.9" rx="0.4"/><circle cx="4" cy="1.4" r="1.45"/><circle cx="6.6" cy="4.1" r="1.4"/><path d="M1.9 3.3 Q0.4 3.1 0.4 4.1 Q0.4 5.1 1.9 4.9 Z"/><path d="M3.1 6 Q3 7.6 4 7.6 Q5 7.6 4.9 6 Z"/></g></svg>
<div class="t" style="left:315.5px;top:474.23px;font-size:6.8px;line-height:9px;color:#4b5563;transform:scaleY(1.08);transform-origin:0 4.42px;">Wordpress</div>
<svg class="a" style="left:409.8px;top:473.65px;" width="8" height="9" viewBox="0 0 8 9"><path d="M2.6 1.5 L3.3 0.6 H4.5 L5.2 1.5" fill="none" stroke="#b83a34" stroke-width="0.85"/><path d="M0.7 1.8 H7.1" stroke="#b83a34" stroke-width="0.9" stroke-linecap="round"/><path d="M1.4 1.9 L1.7 7.6 Q1.8 8.2 2.4 8.2 H5.4 Q6 8.2 6.1 7.6 L6.4 1.9" fill="none" stroke="#b83a34" stroke-width="0.9"/><path d="M2.9 4.8 H4.9" stroke="#b83a34" stroke-width="0.95"/></svg>
<div class="t" style="left:420px;top:474.14px;font-size:8px;line-height:10px;color:#b83a34;-webkit-text-stroke-width:0.2px;transform:scaleY(1.08);transform-origin:0 4.91px;">Deleted</div>
<div class="a" style="left:525.2px;top:468.84999999999997px;width:21.6px;height:21.6px;background:#80bba5;border-radius:50%"></div>
<div class="t" style="left:530.7px;top:475.94px;font-size:7.6px;line-height:10px;color:#3b4656;-webkit-text-stroke-width:0.15px;transform:scaleY(1.08);transform-origin:0 4.91px;">PS</div>
<div class="t" style="left:552.3px;top:470.44px;font-size:8px;line-height:10px;color:#1f2937;-webkit-text-stroke-width:0.2px;transform:scaleY(1.08);transform-origin:0 4.91px;">Parag Shinde</div>
<div class="t" style="left:552.3px;top:481.43px;font-size:6.9px;line-height:9px;color:#5b7ba3;transform:scaleY(1.08);transform-origin:0 4.42px;">Web User</div>
<div class="t" style="left:676.7px;top:473.54px;font-size:8.25px;line-height:11px;color:#2d3748;-webkit-text-stroke-width:0.38px;transform:scaleY(1.08);transform-origin:0 5.41px;">Oct 15, 2024</div>
<div class="t" style="left:727px;top:474.73px;font-size:6.85px;line-height:9px;color:#374151;-webkit-text-stroke-width:0.05px;transform:scaleY(1.08);transform-origin:0 4.42px;">at 11:03 AM</div>
<div class="a" style="left:151.5px;top:540.7px;width:737px;height:1px;background:#eef0f3"></div>
<div class="t" style="left:164px;top:510.54px;font-size:8px;line-height:10px;color:#1f2937;-webkit-text-stroke-width:0.2px;transform:scaleY(1.08);transform-origin:0 4.91px;">Site Unsubscribed</div>
<div class="t" style="left:164px;top:522.63px;font-size:6.65px;line-height:9px;color:#5b7ba3;transform:scaleY(1.08);transform-origin:0 4.42px;">5HN8HE</div>
<svg class="a" style="left:302.8px;top:516.25px;" width="8" height="8" viewBox="0 0 8 8"><g transform="rotate(28 4 4)" fill="#2d3748"><rect x="1.9" y="2.1" width="4" height="3.9" rx="0.4"/><circle cx="4" cy="1.4" r="1.45"/><circle cx="6.6" cy="4.1" r="1.4"/><path d="M1.9 3.3 Q0.4 3.1 0.4 4.1 Q0.4 5.1 1.9 4.9 Z"/><path d="M3.1 6 Q3 7.6 4 7.6 Q5 7.6 4.9 6 Z"/></g></svg>
<div class="t" style="left:315.5px;top:515.93px;font-size:6.8px;line-height:9px;color:#4b5563;transform:scaleY(1.08);transform-origin:0 4.42px;">Wordpress</div>
<svg class="a" style="left:409.8px;top:515.35px;" width="8" height="9" viewBox="0 0 8 9"><path d="M2.6 1.5 L3.3 0.6 H4.5 L5.2 1.5" fill="none" stroke="#5a6372" stroke-width="0.85"/><path d="M0.7 1.8 H7.1" stroke="#5a6372" stroke-width="0.9" stroke-linecap="round"/><path d="M1.4 1.9 L1.7 7.6 Q1.8 8.2 2.4 8.2 H5.4 Q6 8.2 6.1 7.6 L6.4 1.9" fill="none" stroke="#5a6372" stroke-width="0.9"/></svg>
<div class="t" style="left:420px;top:515.84px;font-size:8px;line-height:10px;color:#4b5563;-webkit-text-stroke-width:0.2px;transform:scaleY(1.08);transform-origin:0 4.91px;">Uninstalled</div>
<div class="a" style="left:525.2px;top:510.55px;width:21.6px;height:21.6px;background:#80bba5;border-radius:50%"></div>
<div class="t" style="left:530.7px;top:517.64px;font-size:7.6px;line-height:10px;color:#3b4656;-webkit-text-stroke-width:0.15px;transform:scaleY(1.08);transform-origin:0 4.91px;">PS</div>
<div class="t" style="left:552.3px;top:512.14px;font-size:8px;line-height:10px;color:#1f2937;-webkit-text-stroke-width:0.2px;transform:scaleY(1.08);transform-origin:0 4.91px;">Parag Shinde</div>
<div class="t" style="left:552.3px;top:523.13px;font-size:6.9px;line-height:9px;color:#5b7ba3;transform:scaleY(1.08);transform-origin:0 4.42px;">Web User</div>
<div class="t" style="left:676.7px;top:515.24px;font-size:8.25px;line-height:11px;color:#2d3748;-webkit-text-stroke-width:0.38px;transform:scaleY(1.08);transform-origin:0 5.41px;">Oct 15, 2024</div>
<div class="t" style="left:727px;top:516.43px;font-size:6.85px;line-height:9px;color:#374151;-webkit-text-stroke-width:0.05px;transform:scaleY(1.08);transform-origin:0 4.42px;">at 11:03 AM</div>
<div class="a" style="left:847.5px;top:517.95px;width:2px;height:2px;background:#1f45d6;border-radius:0.6px"></div>
<div class="a" style="left:850.8px;top:517.95px;width:2px;height:2px;background:#1f45d6;border-radius:0.6px"></div>
<div class="a" style="left:853.9px;top:517.95px;width:2px;height:2px;background:#1f45d6;border-radius:0.6px"></div>
<div class="t" style="left:168.7px;top:552.59px;font-size:7.6px;line-height:10px;color:#4b5563;-webkit-text-stroke-width:0.1px;transform:scaleY(1.08);transform-origin:0 4.91px;">Page Size</div>
<div class="t" style="left:208px;top:552.59px;font-size:8px;line-height:10px;color:#3b6fe8;-webkit-text-stroke-width:0.15px;transform:scaleY(1.08);transform-origin:0 4.91px;">8</div>
<svg class="a" style="left:217.5px;top:555.6px;" width="5" height="4" viewBox="0 0 5 4"><path d="M0.5 0.6 L2.5 2.8 L4.5 0.6" stroke="#3b6fe8" stroke-width="1.05" fill="none"/></svg>
<div class="a" style="left:745.7px;top:547.2px;width:46px;height:25px;background:#fff;border:1px solid #e5e7eb;border-radius:4px"></div>
<div class="t" style="left:753px;top:551.79px;font-size:8.2px;line-height:11px;color:#a0a6b0;-webkit-text-stroke-width:0.08px;transform:scaleY(1.08);transform-origin:0 5.41px;">Previous</div>
<div class="a" style="left:799px;top:549px;width:15.2px;height:15.6px;background:#fff;border:1px solid #6b8fe8;border-radius:2px"></div>
<div class="t" style="left:804.2px;top:551.89px;font-size:7.6px;line-height:10px;color:#2d5be0;transform:scaleY(1.08);transform-origin:0 4.91px;">1</div>
<div class="t" style="left:823.5px;top:551.89px;font-size:7.6px;line-height:10px;color:#1f2937;transform:scaleY(1.08);transform-origin:0 4.91px;">2</div>
<div class="a" style="left:840.5px;top:547.2px;width:32.2px;height:25px;background:#fff;border:1px solid #e5e7eb;border-radius:4px"></div>
<div class="t" style="left:848.2px;top:552.09px;font-size:8.1px;line-height:11px;color:#1f2937;-webkit-text-stroke-width:0.15px;transform:scaleY(1.08);transform-origin:0 5.41px;">Next</div>
<div class="a" style="left:919px;top:47px;width:1px;height:519px;background:#2a2a2a"></div>
<svg class="a" style="left:0;top:556px" width="920" height="10" viewBox="0 0 920 10"><path d="M0 3 Q0 8.3 5 8.3 L914 8.3 Q919 8.3 919 3 V0 H920 V10 H0 Z" fill="#121212"/></svg>
</body></html>
